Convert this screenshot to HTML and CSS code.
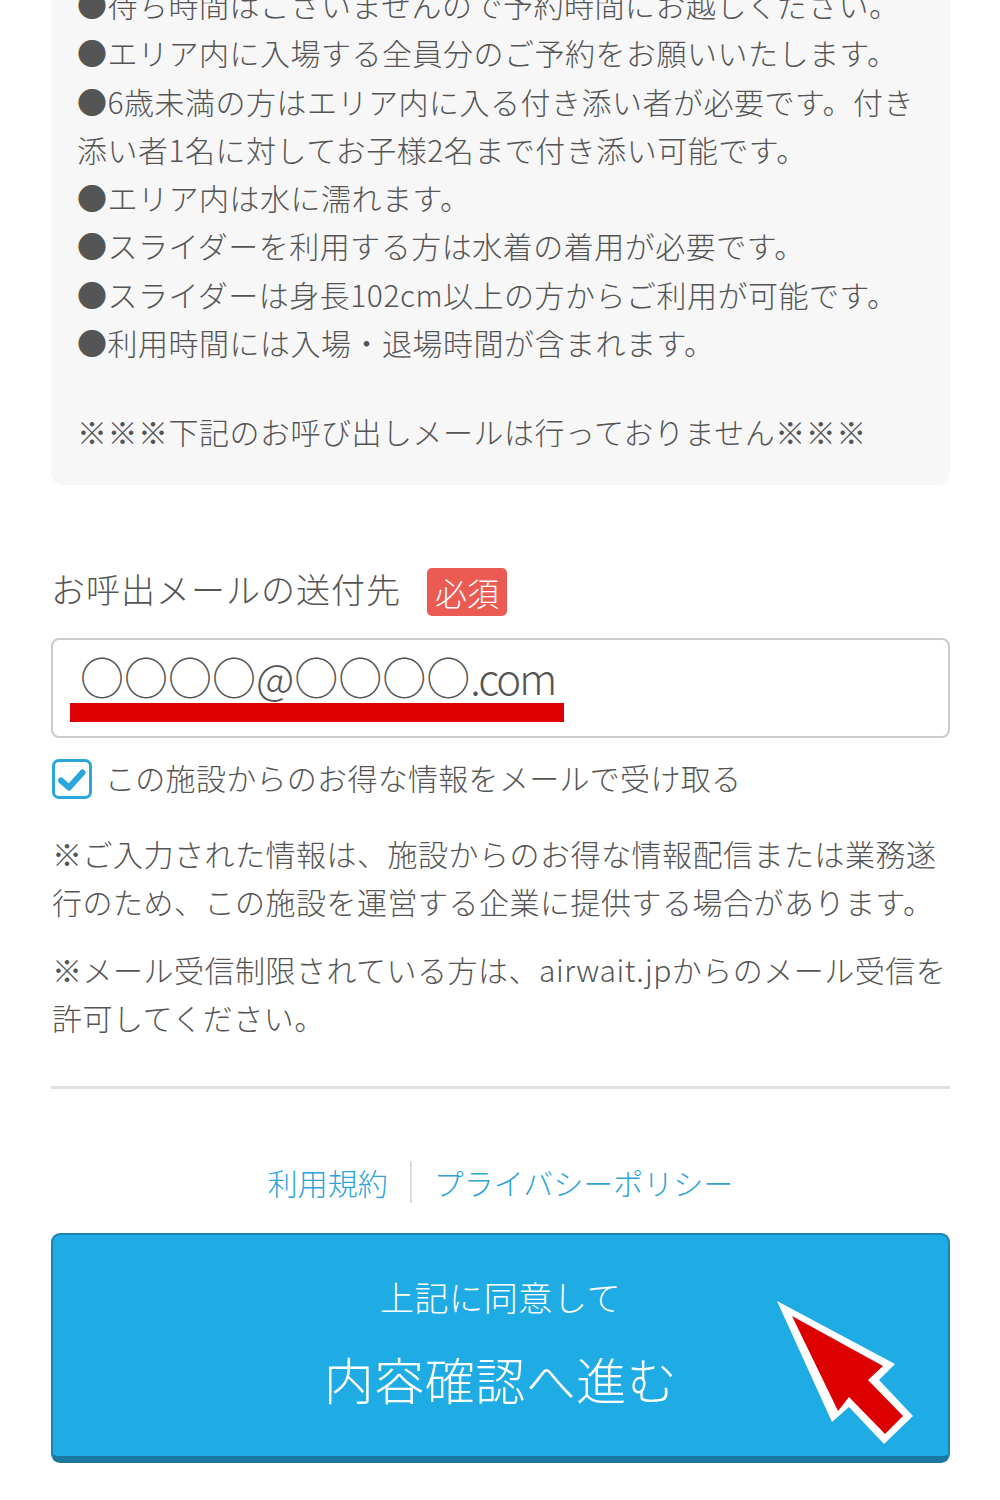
FILE: index.html
```html
<!DOCTYPE html>
<html lang="ja">
<head>
<meta charset="utf-8">
<link rel="stylesheet" href="styles.css">
</head>
<body>
<div class="page">
  <div class="notice">
    <p>●待ち時間はございませんので予約時間にお越しください。</p>
    <p>●エリア内に入場する全員分のご予約をお願いいたします。</p>
    <p>●6歳未満の方はエリア内に入る付き添い者が必要です。付き添い者1名に対してお子様2名まで付き添い可能です。</p>
    <p>●エリア内は水に濡れます。</p>
    <p>●スライダーを利用する方は水着の着用が必要です。</p>
    <p>●スライダーは身長102cm以上の方からご利用が可能です。</p>
    <p>●利用時間には入場・退場時間が含まれます。</p>
    <p class="callout">※※※下記のお呼び出しメールは行っておりません※※※</p>
  </div>

  <div class="label-row">
    <span class="label">お呼出メールの送付先</span>
    <span class="badge">必須</span>
  </div>

  <div class="field">
    <span class="field-value">○○○○<span class="latin">@</span>○○○○<span class="latin com">.com</span></span>
    <span class="redline"></span>
  </div>

  <label class="check-row">
    <span class="checkbox">
      <svg viewBox="0 0 34 34" width="34" height="34">
        <path d="M6 18.5 L14 25.5 L27.5 10.5" fill="none" stroke="#2ba6dd" stroke-width="6" stroke-linecap="round" stroke-linejoin="round"/>
      </svg>
    </span>
    <span class="check-text">この施設からのお得な情報をメールで受け取る</span>
  </label>

  <p class="note note-first">※ご入力された情報は、施設からのお得な情報配信または業務遂行のため、この施設を運営する企業に提供する場合があります。</p>
  <p class="note note-second">※メール受信制限されている方は、airwait.jpからのメール受信を許可してください。</p>

  <div class="divider"></div>

  <div class="links">
    <a class="link">利用規約</a>
    <span class="sep"></span>
    <a class="link">プライバシーポリシー</a>
  </div>

  <div class="button">
    <span class="btn-sub">上記に同意して</span>
    <span class="btn-main">内容確認へ進む</span>
    <svg class="cursor" viewBox="0 0 220 200" width="220" height="200">
      <polygon points="17,22 135,85 119,101 153,137 124,165 89,128 72,143" fill="#ffffff"/>
      <polygon points="32,37 123,87 108,101 143,137 125,155 89,118 78,132" fill="#dd0000"/>
    </svg>
  </div>
</div>
</body>
</html>
```

FILE: styles.css
```css
html, body {
  margin: 0;
  padding: 0;
  background: #ffffff;
}

body {
  font-family: "Noto Sans CJK JP", "Noto Sans", sans-serif;
  font-weight: 300;
  color: #555555;
}

.page {
  padding: 0 50px 40px 51px;
}

.notice {
  background: #f7f7f7;
  border-radius: 0 0 12px 12px;
  margin-top: -20px;
  padding: 0 26px 29px 26px;
  font-size: 30px;
  letter-spacing: 0.5px;
  line-height: 48.3px;
}

.notice p {
  margin: 0;
}

.notice .callout {
  margin-top: 41px;
}

.label-row {
  display: flex;
  align-items: center;
  gap: 26px;
  margin-top: 83px;
  height: 48px;
}

.label {
  font-size: 34px;
  letter-spacing: 1px;
  line-height: 48px;
  position: relative;
  top: -3px;
}

.badge {
  background: #ec5b53;
  color: #ffffff;
  font-size: 32px;
  line-height: 48px;
  padding: 0 8px;
  border-radius: 5px;
}

.field {
  position: relative;
  margin-top: 22px;
  height: 100px;
  box-sizing: border-box;
  border: 2px solid #cccccc;
  border-radius: 8px;
  display: flex;
  align-items: center;
  padding-left: 27px;
  padding-bottom: 22px;
  font-size: 44px;
  color: #555555;
}

.field-value {
  line-height: 60px;
}

.latin {
  font-size: 42px;
}

.com {
  letter-spacing: -2px;
}

.redline {
  position: absolute;
  left: 17px;
  top: 63px;
  width: 494px;
  height: 19px;
  background: #dd0000;
}

.check-row {
  display: flex;
  align-items: center;
  gap: 13px;
  margin-top: 21px;
  height: 40px;
  padding-left: 1px;
}

.checkbox {
  width: 40px;
  height: 40px;
  box-sizing: border-box;
  border: 3px solid #2ba6dd;
  border-radius: 7px;
  background: #ffffff;
  flex: none;
  display: block;
}

.checkbox svg {
  display: block;
  width: 34px;
  height: 34px;
}

.check-text {
  font-size: 30px;
  letter-spacing: 0.3px;
  line-height: 40px;
  position: relative;
  top: -2px;
}

.note {
  margin: 0;
  font-size: 30px;
  letter-spacing: 0.5px;
  line-height: 48.5px;
  padding-left: 1px;
}

.note-first {
  margin-top: 30px;
}

.note-second {
  margin-top: 19px;
}

.divider {
  margin-top: 44px;
  border-top: 3px solid #e0e0e0;
}

.links {
  display: flex;
  justify-content: center;
  align-items: center;
  gap: 22px;
  margin-top: 72px;
  height: 42px;
  font-size: 30px;
  line-height: 42px;
}

.link {
  color: #2ea4d8;
  text-decoration: none;
}

.sep {
  width: 2px;
  height: 42px;
  background: #dddddd;
}

.button {
  position: relative;
  margin-top: 30px;
  height: 230px;
  box-sizing: border-box;
  background: #1fabe3;
  border: 2px solid #1b84b3;
  border-bottom: 7px solid #1a77a0;
  border-radius: 9px;
  display: flex;
  flex-direction: column;
  align-items: center;
  color: #ffffff;
  padding-top: 38px;
}

.btn-sub {
  font-size: 34px;
  line-height: 48px;
  letter-spacing: 0.6px;
}

.btn-main {
  margin-top: 25px;
  font-size: 50px;
  line-height: 64px;
  letter-spacing: 0.5px;
}

.cursor {
  position: absolute;
  left: 707px;
  top: 44px;
}
```
